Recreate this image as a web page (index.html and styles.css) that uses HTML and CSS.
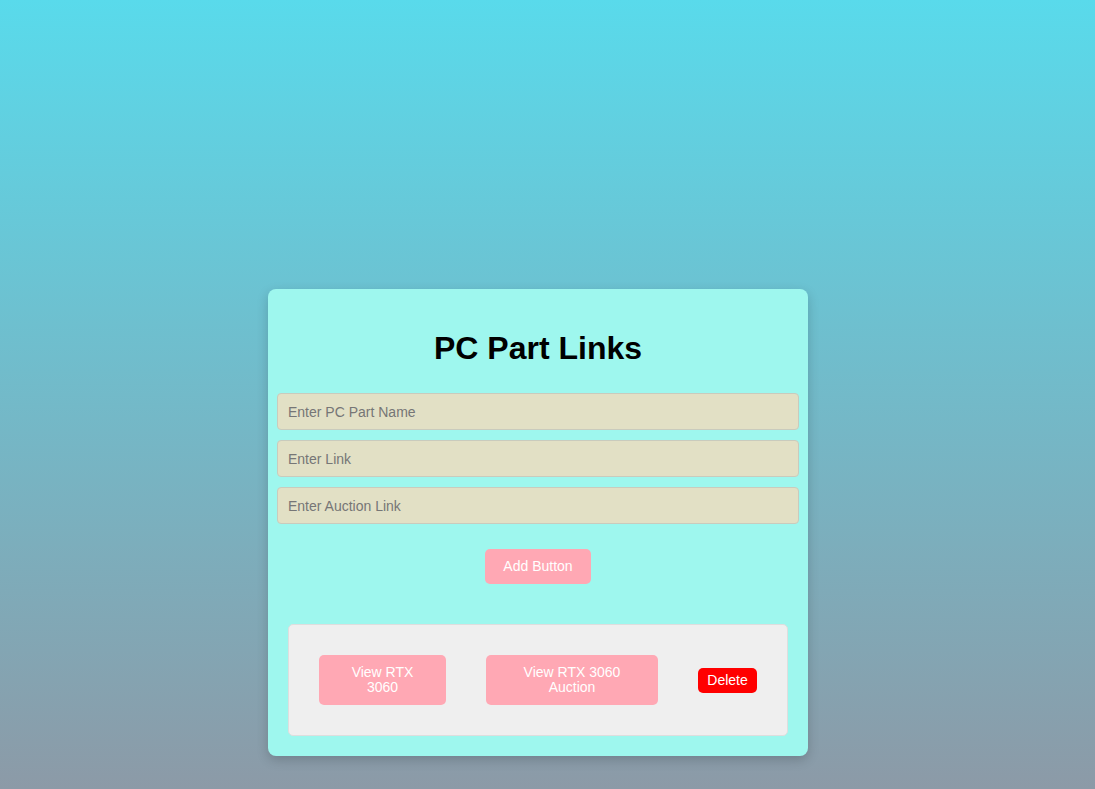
FILE: index.html
```html
<!DOCTYPE html>
<html lang="en">
<head>
<meta charset="utf-8">
<title>PC Part Links</title>
<link rel="stylesheet" href="styles.css">
</head>
<body>
<main class="page">
  <section class="card">
    <h1 class="title">PC Part Links</h1>
    <div class="fields">
      <input class="field" type="text" placeholder="Enter PC Part Name">
      <input class="field" type="text" placeholder="Enter Link">
      <input class="field" type="text" placeholder="Enter Auction Link">
    </div>
    <div class="add-row">
      <button class="btn-pink add-btn">Add Button</button>
    </div>
    <div class="links">
      <div class="link-row">
        <button class="btn-pink view-btn">View RTX 3060</button>
        <button class="btn-pink auction-btn">View RTX 3060 Auction</button>
        <button class="delete-btn">Delete</button>
      </div>
    </div>
  </section>
</main>
</body>
</html>
```

FILE: styles.css
```css
html, body {
  margin: 0;
  padding: 0;
}
body {
  min-height: 100vh;
  background: linear-gradient(to bottom, #59daeb 0%, #8c9aa7 100%);
  font-family: "Liberation Sans", Arial, sans-serif;
}
.page {
  display: flex;
  justify-content: center;
  padding: 289px 19px 33px 0;
}
.card {
  width: 522px;
  padding: 20px 9px 20px;
  background: #9ef7ee;
  border-radius: 8px;
  box-shadow: 0 4px 12px rgba(0, 0, 0, 0.18);
}
.title {
  margin: 21px 0 26px;
  font-size: 32px;
  line-height: 37px;
  font-weight: bold;
  text-align: center;
  color: #000;
}
.fields {
  display: flex;
  flex-direction: column;
  gap: 10px;
}
.field {
  box-sizing: border-box;
  width: 100%;
  height: 37px;
  margin: 0;
  padding: 0 10px;
  background: #e2e0c5;
  border: 1px solid #c9cbbd;
  border-radius: 4px;
  font-family: "Liberation Sans", Arial, sans-serif;
  font-size: 14px;
  color: #333;
}
.field::placeholder {
  color: #767676;
}
.add-row {
  display: flex;
  justify-content: center;
  margin-top: 25px;
}
.btn-pink {
  background: #ffa8b4;
  color: #fff;
  border: none;
  border-radius: 5px;
  font-family: "Liberation Sans", Arial, sans-serif;
  font-size: 14px;
  line-height: 15px;
  text-align: center;
  cursor: pointer;
}
.add-btn {
  width: 106px;
  height: 35px;
  padding: 0;
}
.links {
  margin: 40px 11px 0;
  padding: 30px;
  background: #efefef;
  border: 1px solid #dedede;
  border-radius: 5px;
}
.link-row {
  display: flex;
  align-items: center;
  gap: 40px;
}
.view-btn {
  flex: none;
  width: 127px;
  height: 50px;
  padding: 0 20px;
}
.auction-btn {
  flex: none;
  width: 172px;
  height: 50px;
  padding: 0 20px;
}
.delete-btn {
  flex: none;
  width: 59px;
  height: 25px;
  padding: 0;
  background: #ff0000;
  color: #fff;
  border: none;
  border-radius: 5px;
  font-family: "Liberation Sans", Arial, sans-serif;
  font-size: 14px;
  cursor: pointer;
}
```
